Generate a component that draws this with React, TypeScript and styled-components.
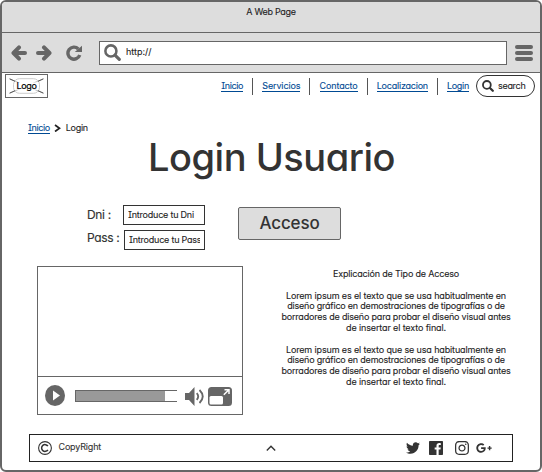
import React from 'react';
import styled, { createGlobalStyle } from 'styled-components';
import { FaTwitter, FaInstagram, FaGooglePlusG } from 'react-icons/fa';

const GlobalStyle = createGlobalStyle`
  * { box-sizing: border-box; }
  body { margin: 0; background: #fff; }
  svg { display: block; flex: none; }
`;

const Window = styled.div`
  width: 542px;
  height: 472px;
  border: 2px solid #666;
  border-radius: 6px;
  background: #fff;
  overflow: hidden;
  display: flex;
  flex-direction: column;
  color: #222;
  font-family: Inter, 'Liberation Sans', sans-serif;
  font-size: 9px;
  line-height: 12px;
  font-feature-settings: 'cv11', 'cv08';
`;

const Text = styled.span<{ $track?: number }>`
  white-space: nowrap;
  letter-spacing: ${(p) => p.$track ?? -0.2}px;
  -webkit-text-stroke: 0.1px currentColor;
`;

const Link = styled.a<{ $track?: number }>`
  color: #004a93;
  white-space: nowrap;
  letter-spacing: ${(p) => p.$track ?? -0.2}px;
  border-bottom: 1px solid #004a93;
  line-height: 10px;
  -webkit-text-stroke: 0.1px currentColor;
`;

const TitleBar = styled.header`
  height: 31px;
  flex: none;
  padding-top: 4px;
  text-align: center;
  background: #ddd;
  border-bottom: 1px solid #666;
`;

const Toolbar = styled.div`
  height: 40px;
  flex: none;
  display: flex;
  align-items: center;
  padding: 0 6px 0 9px;
  background: #ddd;
  border-bottom: 1px solid #666;
`;

const HistoryButtons = styled.div`
  display: flex;
  gap: 9px;
  width: 88px;
  > :last-child { margin-left: 5px; }
`;

const AddressBar = styled.div`
  width: 408px;
  height: 24px;
  display: flex;
  align-items: center;
  gap: 5px;
  padding: 0 0 1px 4px;
  background: #fff;
  border: 1px solid #666;
`;

const MenuBars = styled.div`
  margin-left: 8px;
  width: 18px;
  display: grid;
  gap: 2px;
`;

const MenuBar = styled.span`
  height: 4px;
  border-radius: 2px;
  background: #666;
`;

const NavRow = styled.nav`
  height: 26px;
  flex: none;
  display: flex;
  align-items: center;
  padding: 0 5px 0 3px;
`;

const Logo = styled.div`
  width: 43px;
  height: 24px;
  border: 1px solid #666;
  display: grid;
  place-items: center;
  > * { grid-area: 1 / 1; }
`;

const LogoLabel = styled(Text)`
  color: #000;
  -webkit-text-stroke: 0.2px #000;
`;

const NavLinks = styled.div`
  margin-left: auto;
  display: flex;
  align-items: center;
`;

const NavItem = styled.div`
  display: flex;
  align-items: center;
  height: 17px;
  padding: 0 9.1px;
  & + & { border-left: 1px solid #555; }
  &:last-child { padding: 0 7px 0 9px; }
`;

const SearchPill = styled.div`
  width: 59px;
  height: 22px;
  display: flex;
  align-items: center;
  gap: 4px;
  padding-left: 5px;
  border: 1px solid #333;
  border-radius: 11px;
`;

const Page = styled.main`
  flex: 1;
  display: flex;
  flex-direction: column;
  padding: 23px 27px 8px;
`;

const Breadcrumb = styled.div`
  height: 12px;
  margin-left: -1px;
  display: flex;
  align-items: center;
  gap: 4.5px;
`;

const Heading = styled.h1`
  margin: 0 0 0 1px;
  height: 71px;
  padding-top: 1px;
  text-align: center;
  color: #333;
  font-size: 38px;
  line-height: 45px;
  font-weight: 500;
  letter-spacing: -0.48px;
`;

const LoginForm = styled.form`
  height: 61px;
  display: flex;
  align-items: flex-start;
  padding-left: 58px;
`;

const Fields = styled.div`
  width: 118px;
  display: grid;
  gap: 5px;
`;

const Field = styled.label`
  height: 20px;
  display: flex;
  align-items: center;
  justify-content: space-between;
`;

const FieldName = styled.span<{ $lift?: number }>`
  font-size: 12px;
  letter-spacing: -0.35px;
  color: #333;
  white-space: nowrap;
  padding-bottom: ${(p) => p.$lift ?? 0}px;
  -webkit-text-stroke: 0.15px #333;
`;

const Input = styled.input<{ $width: number }>`
  width: ${(p) => p.$width}px;
  height: 20px;
  padding: 0 4px 2px 4px;
  border: 1px solid #333;
  border-radius: 0;
  background: #fff;
  font: inherit;
  font-feature-settings: inherit;
  letter-spacing: -0.22px;
  outline: none;
  &::placeholder { color: #222; opacity: 1; -webkit-text-stroke: 0.1px #222; }
`;

const SubmitButton = styled.button`
  width: 103px;
  height: 33px;
  margin: 2px 0 0 33px;
  padding: 0 0 2px;
  background: #ddd;
  border: 1px solid #666;
  border-radius: 2px;
  color: #333;
  font-family: inherit;
  font-feature-settings: inherit;
  font-size: 17px;
  font-weight: 500;
  letter-spacing: -0.15px;
`;

const Columns = styled.div`
  height: 168px;
  display: flex;
  align-items: flex-start;
`;

const Player = styled.div`
  flex: none;
  width: 206px;
  height: 149px;
  margin-left: 8px;
  border: 1px solid #666;
  display: flex;
  flex-direction: column;
`;

const Screen = styled.div`
  flex: 1;
`;

const Controls = styled.div`
  height: 38px;
  display: flex;
  align-items: center;
  padding: 0 10px 0 7px;
  border-top: 1px solid #666;
`;

const Track = styled.div`
  flex: none;
  width: 102px;
  height: 12px;
  margin: 0 8px 0 10px;
  border: solid #666;
  border-width: 1px 0 1px 1px;
`;

const Progress = styled.div`
  width: 89px;
  height: 100%;
  background: #999;
`;

const Explanation = styled.div`
  flex: none;
  width: 250px;
  margin-left: 28px;
  padding-top: 3px;
  text-align: center;
  line-height: 10.8px;
`;

const Paragraph = styled.p`
  margin: 0 0 10.8px;
  display: flex;
  flex-direction: column;
`;

const Footer = styled.footer`
  width: 484px;
  height: 28px;
  display: flex;
  align-items: center;
  padding: 0 20px 0 8px;
  border: 1px solid #222;
  color: #333;
`;

const Copy = styled.div`
  width: 228px;
  display: flex;
  align-items: center;
  gap: 6.5px;
`;

const CopyText = styled(Text)`
  padding-bottom: 2px;
`;

const Social = styled.div`
  margin-left: auto;
  display: flex;
  align-items: center;
`;

const SocialLink = styled.span<{ $gap: number }>`
  margin-left: ${(p) => p.$gap}px;
`;

const Arrow = ({ forward = false }: { forward?: boolean }) => (
  <svg width="16" height="16" viewBox="0 0 16 16" fill="none" stroke="#666" strokeWidth="4" strokeLinecap="round" strokeLinejoin="round">
    <path d={forward ? 'M2 8H12M8 2.4L13.5 8L8 13.6' : 'M14 8H4M8 2.4L2.5 8L8 13.6'} />
  </svg>
);

const Reload = () => (
  <svg width="16" height="16" viewBox="0 0 16 16">
    <path d="M12.3 4A6 6 0 1 0 13.7 9.9" fill="none" stroke="#666" strokeWidth="3.4" />
    <path d="M16 .8V7H8.8Z" fill="#666" />
  </svg>
);

const Magnifier = ({ size, color }: { size: number; color: string }) => (
  <svg width={size} height={size} viewBox="0 0 16 16" fill="none" stroke={color} strokeLinecap="round">
    <circle cx="6.5" cy="6.5" r="5.2" strokeWidth="2.4" />
    <path d="M10.6 10.6L14.4 14.4" strokeWidth="3" />
  </svg>
);

const LogoMark = () => (
  <svg width="35" height="16" viewBox="0 0 35 16" fill="none">
    <path d="M1 1L34 15M34 1L1 15" stroke="#bbb" />
    <rect x="4.5" y=".7" width="26" height="14.6" rx="6" stroke="#ccc" />
    <path d="M.5 .8L6 3.3M34.5 .8L29 3.3M.5 15.2L6 12.7M34.5 15.2L29 12.7" stroke="#555" />
    <path d="M7 4.5H28V11.5H7Z" fill="#fff" />
  </svg>
);

const NAV = [
  { label: 'Inicio', track: -0.37 },
  { label: 'Servicios', track: -0.13 },
  { label: 'Contacto', track: -0.13 },
  { label: 'Localizacion', track: -0.23 },
  { label: 'Login', track: -0.3 },
];

const LOREM = [
  { line: 'Lorem ipsum es el texto que se usa habitualmente en', track: -0.14 },
  { line: 'diseño gráfico en demostraciones de tipografías o de', track: -0.21 },
  { line: 'borradores de diseño para probar el diseño visual antes', track: -0.19 },
  { line: 'de insertar el texto final.', track: -0.13 },
];

const Lorem = () => (
  <Paragraph>
    {LOREM.map(({ line, track }) => (
      <Text key={line} $track={track}>{line}</Text>
    ))}
  </Paragraph>
);

export default function App() {
  return (
    <Window>
      <GlobalStyle />
      <TitleBar><Text $track={-0.3}>A Web Page</Text></TitleBar>
      <Toolbar>
        <HistoryButtons>
          <Arrow />
          <Arrow forward />
          <Reload />
        </HistoryButtons>
        <AddressBar>
          <Magnifier size={17} color="#666" />
          <Text $track={0}>http://</Text>
        </AddressBar>
        <MenuBars><MenuBar /><MenuBar /><MenuBar /></MenuBars>
      </Toolbar>
      <NavRow>
        <Logo>
          <LogoMark />
          <LogoLabel $track={-0.3}>Logo</LogoLabel>
        </Logo>
        <NavLinks>
          {NAV.map(({ label, track }) => (
            <NavItem key={label}><Link $track={track}>{label}</Link></NavItem>
          ))}
        </NavLinks>
        <SearchPill>
          <Magnifier size={12} color="#333" />
          <Text $track={-0.3}>search</Text>
        </SearchPill>
      </NavRow>
      <Page>
        <Breadcrumb>
          <Link $track={-0.4}>Inicio</Link>
          <svg width="7" height="8" viewBox="0 0 7 8" fill="none" stroke="#222" strokeWidth="1.7">
            <path d="M1 1L5.5 4.3L1 7.5" />
          </svg>
          <Text $track={-0.3}>Login</Text>
        </Breadcrumb>
        <Heading>Login Usuario</Heading>
        <LoginForm>
          <Fields>
            <Field>
              <FieldName>Dni :</FieldName>
              <Input $width={82} placeholder="Introduce tu Dni" />
            </Field>
            <Field>
              <FieldName $lift={4}>Pass :</FieldName>
              <Input $width={81} placeholder="Introduce tu Pass" />
            </Field>
          </Fields>
          <SubmitButton type="button">Acceso</SubmitButton>
        </LoginForm>
        <Columns>
          <Player>
            <Screen />
            <Controls>
              <svg width="20" height="21" viewBox="0 0 20 21">
                <ellipse cx="10" cy="10.5" rx="10" ry="10.5" fill="#666" />
                <path d="M8 5.5L15 10.5L8 15.5Z" fill="#fff" />
              </svg>
              <Track><Progress /></Track>
              <svg width="20" height="20" viewBox="0 0 20 20">
                <path d="M0 7H4L9.5 1V20L4 14H0Z" fill="#666" />
                <path d="M11.7 7.2Q14.7 10.5 11.7 13.8M14.5 4Q21 10.5 14.5 17" fill="none" stroke="#666" strokeWidth="1.8" />
              </svg>
              <svg width="27" height="20" viewBox="0 0 27 20">
                <rect x="3" y="1" width="24" height="19" rx="3.5" fill="#666" />
                <rect x="4.5" y="10" width="13.5" height="8.5" rx="1.5" fill="#fff" />
                <path d="M18.8 8.8L23.4 4.2M19.5 3.8H24V8" fill="none" stroke="#fff" strokeWidth="1.5" />
              </svg>
            </Controls>
          </Player>
          <Explanation>
            <Paragraph><Text $track={-0.18}>Explicación de Tipo de Acceso</Text></Paragraph>
            <Lorem />
            <Lorem />
          </Explanation>
        </Columns>
        <Footer>
          <Copy>
            <svg width="14" height="14" viewBox="0 0 14 14" fill="none" stroke="#333">
              <circle cx="7" cy="7" r="6.4" strokeWidth="1.1" />
              <path d="M9.9 5.2A3.4 3.4 0 1 0 9.9 8.8" strokeWidth="1.5" />
            </svg>
            <CopyText $track={-0.18}>CopyRight</CopyText>
          </Copy>
          <svg width="10" height="6" viewBox="0 0 10 6" fill="none" stroke="#333" strokeWidth="1.4">
            <path d="M.8 5.4L5 1.2L9.2 5.4" />
          </svg>
          <Social>
            <SocialLink $gap={0}><FaTwitter size={14} /></SocialLink>
            <SocialLink $gap={9}>
              <svg width="14" height="14" viewBox="3 3 18 18" fill="currentColor">
                <path d="M20 3H4a1 1 0 0 0-1 1v16a1 1 0 0 0 1 1h8.615v-6.96h-2.338v-2.725h2.338v-2c0-2.325 1.42-3.592 3.5-3.592.699-.002 1.399.034 2.095.106v2.42h-1.428c-1.13 0-1.35.534-1.35 1.322v1.735h2.7l-.351 2.725h-2.365V21H20a1 1 0 0 0 1-1V4a1 1 0 0 0-1-1z" />
              </svg>
            </SocialLink>
            <SocialLink $gap={11}><FaInstagram size={16} /></SocialLink>
            <SocialLink $gap={6}><FaGooglePlusG size={16} /></SocialLink>
          </Social>
        </Footer>
      </Page>
    </Window>
  );
}
